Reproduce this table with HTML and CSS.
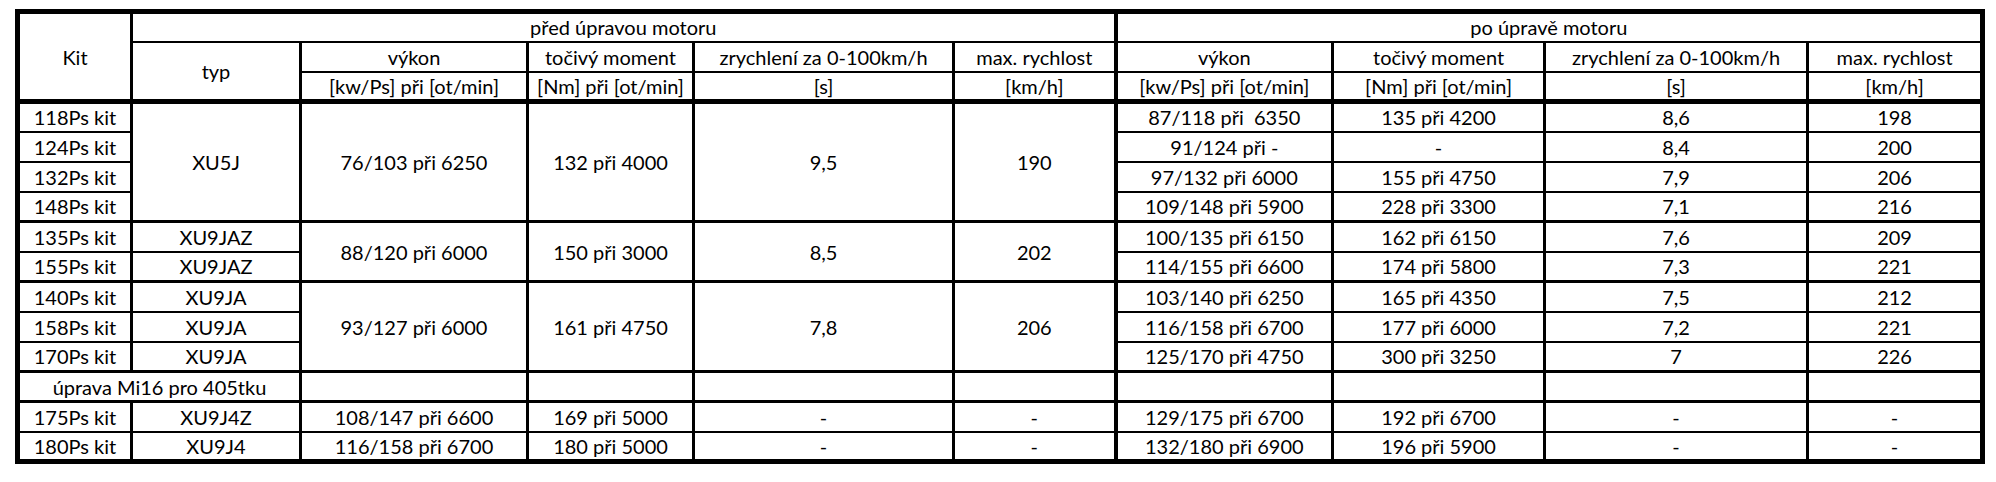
FILE: index.html
```html
<!DOCTYPE html>
<html lang="cs">
<head>
<meta charset="utf-8">
<title>Kity motoru</title>
<link rel="stylesheet" href="styles.css">
</head>
<body>
<div class="sheet">
<table class="kits">
  <colgroup>
    <col class="c-kit">
    <col class="c-typ">
    <col class="c-vykon">
    <col class="c-moment">
    <col class="c-zrych">
    <col class="c-max">
    <col class="c-vykon2">
    <col class="c-moment2">
    <col class="c-zrych2">
    <col class="c-max2">
  </colgroup>
  <thead>
    <tr>
      <td rowspan="3" class="hb">Kit</td>
      <td colspan="5" class="split">před úpravou motoru</td>
      <td colspan="4">po úpravě motoru</td>
    </tr>
    <tr>
      <td rowspan="2" class="hb">typ</td>
      <td>výkon</td>
      <td>točivý moment</td>
      <td>zrychlení za 0-100km/h</td>
      <td class="split">max. rychlost</td>
      <td>výkon</td>
      <td>točivý moment</td>
      <td>zrychlení za 0-100km/h</td>
      <td>max. rychlost</td>
    </tr>
    <tr>
      <td class="hb">[kw/Ps] při [ot/min]</td>
      <td class="hb">[Nm] při [ot/min]</td>
      <td class="hb">[s]</td>
      <td class="hb split">[km/h]</td>
      <td class="hb">[kw/Ps] při [ot/min]</td>
      <td class="hb">[Nm] při [ot/min]</td>
      <td class="hb">[s]</td>
      <td class="hb">[km/h]</td>
    </tr>
  </thead>
  <tbody>
    <tr class="grp">
      <td>118Ps kit</td>
      <td rowspan="4">XU5J</td>
      <td rowspan="4">76/103 při 6250</td>
      <td rowspan="4">132 při 4000</td>
      <td rowspan="4">9,5</td>
      <td rowspan="4" class="split">190</td>
      <td>87/118 při&nbsp; 6350</td>
      <td>135 při 4200</td>
      <td>8,6</td>
      <td>198</td>
    </tr>
    <tr>
      <td>124Ps kit</td>
      <td>91/124 při -</td>
      <td>-</td>
      <td>8,4</td>
      <td>200</td>
    </tr>
    <tr>
      <td>132Ps kit</td>
      <td>97/132 při 6000</td>
      <td>155 při 4750</td>
      <td>7,9</td>
      <td>206</td>
    </tr>
    <tr>
      <td>148Ps kit</td>
      <td>109/148 při 5900</td>
      <td>228 při 3300</td>
      <td>7,1</td>
      <td>216</td>
    </tr>
    <tr class="grp">
      <td>135Ps kit</td>
      <td>XU9JAZ</td>
      <td rowspan="2">88/120 při 6000</td>
      <td rowspan="2">150 při 3000</td>
      <td rowspan="2">8,5</td>
      <td rowspan="2" class="split">202</td>
      <td>100/135 při 6150</td>
      <td>162 při 6150</td>
      <td>7,6</td>
      <td>209</td>
    </tr>
    <tr>
      <td>155Ps kit</td>
      <td>XU9JAZ</td>
      <td>114/155 při 6600</td>
      <td>174 při 5800</td>
      <td>7,3</td>
      <td>221</td>
    </tr>
    <tr class="grp">
      <td>140Ps kit</td>
      <td>XU9JA</td>
      <td rowspan="3">93/127 při 6000</td>
      <td rowspan="3">161 při 4750</td>
      <td rowspan="3">7,8</td>
      <td rowspan="3" class="split">206</td>
      <td>103/140 při 6250</td>
      <td>165 při 4350</td>
      <td>7,5</td>
      <td>212</td>
    </tr>
    <tr>
      <td>158Ps kit</td>
      <td>XU9JA</td>
      <td>116/158 při 6700</td>
      <td>177 při 6000</td>
      <td>7,2</td>
      <td>221</td>
    </tr>
    <tr>
      <td>170Ps kit</td>
      <td>XU9JA</td>
      <td>125/170 při 4750</td>
      <td>300 při 3250</td>
      <td>7</td>
      <td>226</td>
    </tr>
    <tr class="grp">
      <td colspan="2">úprava Mi16 pro 405tku</td>
      <td></td>
      <td></td>
      <td></td>
      <td class="split"></td>
      <td></td>
      <td></td>
      <td></td>
      <td></td>
    </tr>
    <tr class="grp">
      <td>175Ps kit</td>
      <td>XU9J4Z</td>
      <td>108/147 při 6600</td>
      <td>169 při 5000</td>
      <td>-</td>
      <td class="split">-</td>
      <td>129/175 při 6700</td>
      <td>192 při 6700</td>
      <td>-</td>
      <td>-</td>
    </tr>
    <tr>
      <td>180Ps kit</td>
      <td>XU9J4</td>
      <td>116/158 při 6700</td>
      <td>180 při 5000</td>
      <td>-</td>
      <td class="split">-</td>
      <td>132/180 při 6900</td>
      <td>196 při 5900</td>
      <td>-</td>
      <td>-</td>
    </tr>
  </tbody>
</table>
</div>
</body>
</html>
```

FILE: styles.css
```css
html, body {
  margin: 0;
  padding: 0;
  background: #ffffff;
}

.sheet {
  padding: 9px 0 0 15px;
}

.kits {
  border-collapse: collapse;
  table-layout: fixed;
  width: 1965px;
  border: 5px solid #000;
  font-family: Lato, "Open Sans", "Liberation Sans", sans-serif;
  font-size: 20px;
  color: #000;
}

.c-kit { width: 114px; }
.c-typ { width: 169px; }
.c-vykon { width: 227px; }
.c-moment { width: 166px; }
.c-zrych { width: 260px; }
.c-max { width: 162px; }
.c-vykon2 { width: 217px; }
.c-moment2 { width: 212px; }
.c-zrych2 { width: 263px; }
.c-max2 { width: 175px; }

.kits tr {
  height: 30px;
}

.kits td {
  border-top: 2px solid #000;
  border-bottom: 2px solid #000;
  border-left: 3px solid #000;
  border-right: 3px solid #000;
  padding: 0;
  text-align: center;
  vertical-align: middle;
  white-space: nowrap;
  line-height: 1;
}

.kits td.hb {
  border-bottom: 5px solid #000;
}

.kits td.split {
  border-right: 4px solid #000;
}

.kits tr.grp td {
  border-top: 3px solid #000;
}
```
